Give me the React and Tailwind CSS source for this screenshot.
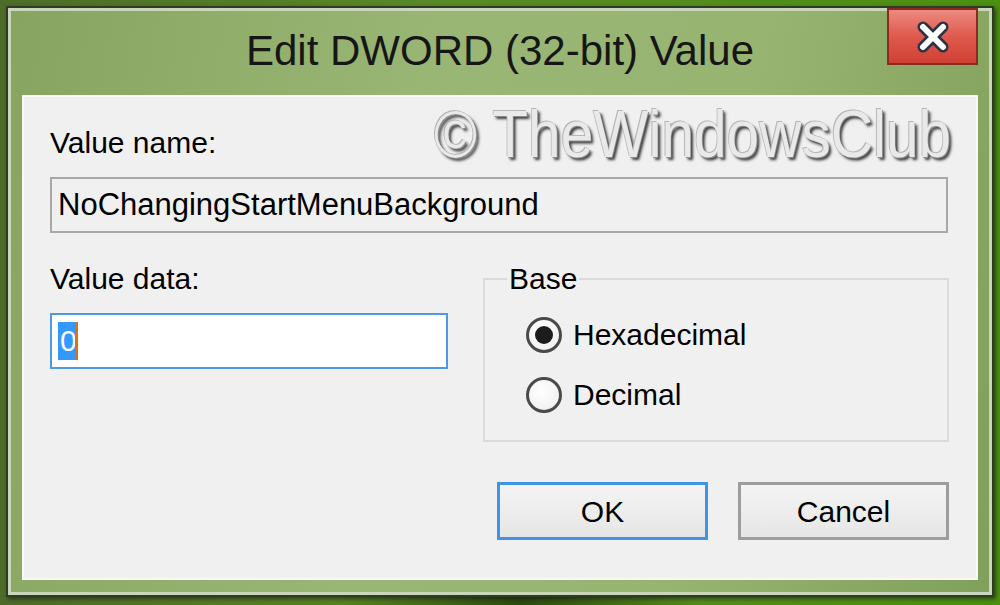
import React from 'react';

const sans = { fontFamily: '"Liberation Sans", Arial, sans-serif' };

const Radio = ({ checked, label }) => (
    <label className="flex items-center h-[36px] ml-[19px]">
        <span className="flex items-center justify-center w-[36px] h-[36px] rounded-full border-[3px] border-[#4a4a4a] bg-[radial-gradient(circle_at_40%_35%,#ffffff,#ececec)]">
            {checked && <span className="w-[18px] h-[18px] rounded-full bg-[#1c1c1c]" />}
        </span>
        <span className="ml-[11px] text-[30px] leading-[30px] text-black">{label}</span>
    </label>
);

const CloseIcon = () => (
    <svg width="34" height="34" viewBox="0 0 34 34">
        <path d="M7 7 L27 27 M27 7 L7 27" stroke="#2b3342" strokeWidth="11" strokeLinecap="round" />
        <path d="M7 7 L27 27 M27 7 L7 27" stroke="#ffffff" strokeWidth="6" strokeLinecap="round" />
    </svg>
);

const App = () => {
    return (
        <div
            className="w-[1000px] h-[605px] overflow-hidden pt-[6px] pl-[6px] bg-[radial-gradient(ellipse_18%_30%_at_52%_100%,#2a4a10_0%,transparent_100%),linear-gradient(90deg,#4d6c29_0%,#5a8a25_45%,#4b9012_100%)]"
            style={sans}
        >
            <div className="relative w-[988px] h-[591px] border-2 border-[#2f3a27] shadow-[2px_2px_4px_rgba(0,0,0,0.5)]">
                <div className="h-full flex flex-col border-[3px] border-[#c9d6ba] bg-[linear-gradient(100deg,#87a560_0%,#9ab675_40%,#98b471_70%,#80a05b_100%)] px-[11px] pb-[12px]">
                    <div className="h-[84px] pt-[19px] text-center text-[42px] leading-[42px] text-[#161616]">
                        Edit DWORD (32-bit) Value
                    </div>

                    <div className="relative flex-1 bg-[#f0f0f0] border-2 border-[#f9f9f7] pt-[31px] pl-[26px] pr-[27px]">
                        <div className="text-[30px] leading-[30px] text-black">Value name:</div>
                        <div className="mt-[19px] h-[56px] w-[898px] border-2 border-[#a8a8a8] bg-[#f0f0f0] flex items-center pl-[6px] text-[31px] text-black">
                            NoChangingStartMenuBackground
                        </div>

                        <div className="mt-[31px] flex gap-[35px]">
                            <div className="w-[398px]">
                                <div className="text-[30px] leading-[30px] text-black">Value data:</div>
                                <div className="mt-[19px] h-[56px] border-2 border-[#4f98e6] bg-white flex items-center pl-[6px]">
                                    <span className="h-[38px] w-[20px] flex items-center bg-[#3399ff] text-white text-[30px] leading-[30px] pl-[2px]">
                                        0
                                    </span>
                                    <span className="h-[38px] w-[3px] bg-[#e0700f] -ml-[3px]" />
                                </div>
                            </div>

                            <fieldset className="w-[466px] h-[178px] border-2 border-[#dadada] pl-[22px]">
                                <legend className="px-[2px] text-[30px] leading-[30px] text-black">Base</legend>
                                <div className="mt-[23px] flex flex-col gap-[24px]">
                                    <Radio checked label="Hexadecimal" />
                                    <Radio label="Decimal" />
                                </div>
                            </fieldset>
                        </div>

                        <div className="mt-[40px] flex justify-end gap-[30px]">
                            <button className="w-[211px] h-[58px] border-[3px] border-[#3f94ea] bg-[linear-gradient(180deg,#f4f4f4,#e6e6e6)] text-[30px] text-black">
                                OK
                            </button>
                            <button className="w-[211px] h-[58px] border-[3px] border-[#9d9d9d] bg-[linear-gradient(180deg,#f4f4f4,#e6e6e6)] text-[30px] text-black">
                                Cancel
                            </button>
                        </div>

                        <div className="absolute left-[410px] top-[4px] origin-left scale-x-[0.887] whitespace-nowrap text-[66px] leading-[66px] text-[#e9e9e9] [text-shadow:-1px_-1px_0_#b5b5b5,1px_1px_0_#8a8a8a,3px_3px_3px_#3d3d3d]">
                            © TheWindowsClub
                        </div>
                    </div>
                </div>

                <button className="absolute top-0 right-[14px] w-[91px] h-[57px] flex items-center justify-center border-2 border-[#8c2a22] bg-[linear-gradient(180deg,#ec8a80_0%,#e0594d_50%,#cf4034_100%)]">
                    <CloseIcon />
                </button>
            </div>
        </div>
    );
};

export default App;
